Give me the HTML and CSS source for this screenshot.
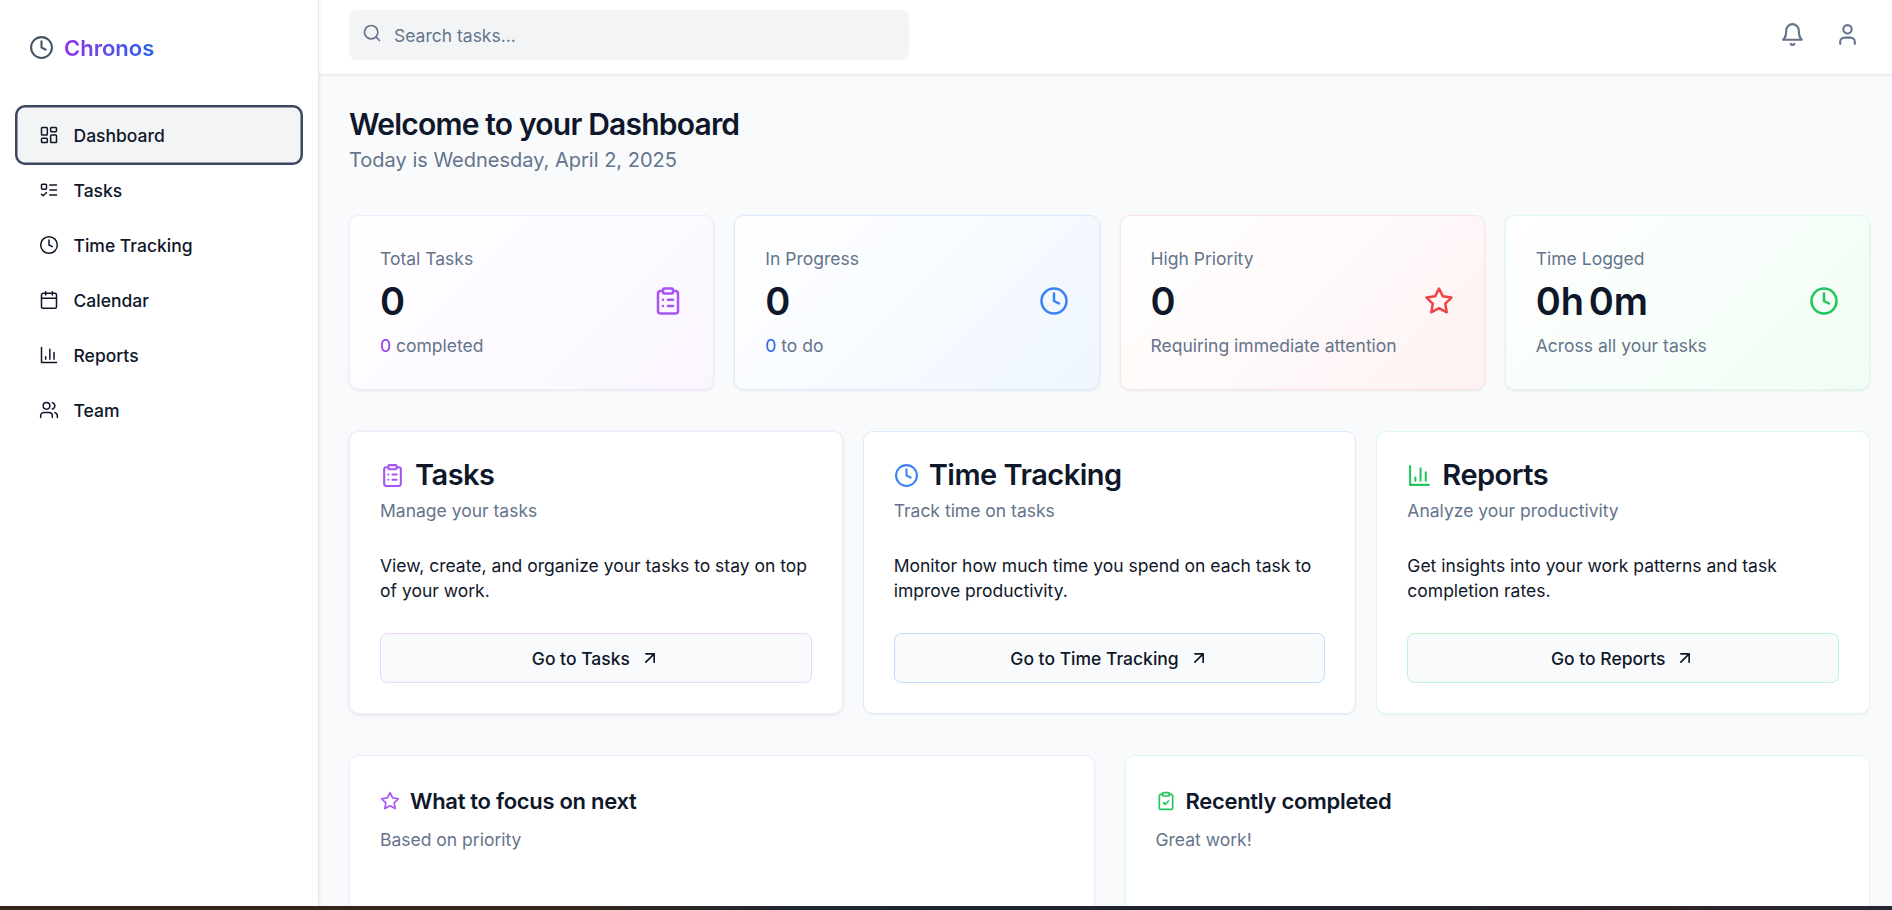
FILE: index.html
```html
<!DOCTYPE html>
<html lang="en">
<head>
<meta charset="utf-8">
<title>Chronos</title>
<link rel="stylesheet" href="styles.css">
</head>
<body>
<svg class="defs" width="0" height="0" aria-hidden="true">
  <defs>
    <symbol id="i-clock" viewBox="0 0 24 24"><circle cx="12" cy="12" r="10"/><path d="M12 6v6l4 2"/></symbol>
    <symbol id="i-clipboard" viewBox="0 0 24 24"><rect x="8" y="2" width="8" height="4" rx="1"/><path d="M16 4h2a2 2 0 0 1 2 2v14a2 2 0 0 1-2 2H6a2 2 0 0 1-2-2V6a2 2 0 0 1 2-2h2"/><path d="M12 11h4M12 16h4M8 11h.01M8 16h.01"/></symbol>
    <symbol id="i-check" viewBox="0 0 24 24"><rect x="8" y="2" width="8" height="4" rx="1"/><path d="M16 4h2a2 2 0 0 1 2 2v14a2 2 0 0 1-2 2H6a2 2 0 0 1-2-2V6a2 2 0 0 1 2-2h2"/><path d="m9 14 2 2 4-4"/></symbol>
    <symbol id="i-star" viewBox="0 0 24 24"><path d="M12 2l3.09 6.26L22 9.27l-5 4.87 1.18 6.88L12 17.77l-6.18 3.25L7 14.14 2 9.27l6.91-1.01L12 2z"/></symbol>
    <symbol id="i-chart" viewBox="0 0 24 24"><path d="M3 3v18h18"/><path d="M18 17V9M13 17V5M8 17v-3"/></symbol>
    <symbol id="i-arrow" viewBox="0 0 24 24"><path d="M7 17 17 7M7 7h10v10"/></symbol>
  </defs>
</svg>
<div class="app">
  <aside class="sidebar">
    <div class="brand">
      <svg class="icon brand-icon"><use href="#i-clock"/></svg>
      <span class="brand-name">Chronos</span>
    </div>
    <nav class="nav">
      <a class="nav-item active">
        <svg class="icon nav-icon" viewBox="0 0 24 24"><rect x="3" y="3" width="7" height="9" rx="1"/><rect x="14" y="3" width="7" height="5" rx="1"/><rect x="14" y="12" width="7" height="9" rx="1"/><rect x="3" y="16" width="7" height="5" rx="1"/></svg>
        Dashboard
      </a>
      <a class="nav-item">
        <svg class="icon nav-icon" viewBox="0 0 24 24"><rect x="3" y="5" width="6" height="6" rx="1"/><path d="m3 17 2 2 4-4"/><path d="M13 6h8M13 12h8M13 18h8"/></svg>
        Tasks
      </a>
      <a class="nav-item"><svg class="icon nav-icon"><use href="#i-clock"/></svg>Time Tracking</a>
      <a class="nav-item">
        <svg class="icon nav-icon" viewBox="0 0 24 24"><path d="M8 2v4M16 2v4"/><rect x="3" y="4" width="18" height="18" rx="2"/><path d="M3 10h18"/></svg>
        Calendar
      </a>
      <a class="nav-item"><svg class="icon nav-icon"><use href="#i-chart"/></svg>Reports</a>
      <a class="nav-item">
        <svg class="icon nav-icon" viewBox="0 0 24 24"><path d="M16 21v-2a4 4 0 0 0-4-4H6a4 4 0 0 0-4 4v2"/><circle cx="9" cy="7" r="4"/><path d="M22 21v-2a4 4 0 0 0-3-3.87M16 3.13a4 4 0 0 1 0 7.75"/></svg>
        Team
      </a>
    </nav>
  </aside>
  <div class="content">
    <header class="topbar">
      <div class="search">
        <svg class="icon search-icon" viewBox="0 0 24 24"><circle cx="11" cy="11" r="8"/><path d="m21 21-4.3-4.3"/></svg>
        <span class="search-text">Search tasks...</span>
      </div>
      <div class="top-actions">
        <svg class="icon top-icon" viewBox="0 0 24 24"><path d="M6 8a6 6 0 0 1 12 0c0 7 3 9 3 9H3s3-2 3-9"/><path d="M10.3 21a1.94 1.94 0 0 0 3.4 0"/></svg>
        <svg class="icon top-icon" viewBox="0 0 24 24"><path d="M19 21v-2a4 4 0 0 0-4-4H9a4 4 0 0 0-4 4v2"/><circle cx="12" cy="7" r="4"/></svg>
      </div>
    </header>
    <main class="main">
      <h1 class="page-title">Welcome to your Dashboard</h1>
      <p class="page-sub">Today is Wednesday, April 2, 2025</p>

      <section class="stats">
        <div class="stat purple">
          <div class="stat-label">Total Tasks</div>
          <div class="stat-row"><span class="stat-value">0</span><svg class="icon stat-icon"><use href="#i-clipboard"/></svg></div>
          <div class="stat-note"><span class="num">0</span> completed</div>
        </div>
        <div class="stat blue">
          <div class="stat-label">In Progress</div>
          <div class="stat-row"><span class="stat-value">0</span><svg class="icon stat-icon"><use href="#i-clock"/></svg></div>
          <div class="stat-note"><span class="num">0</span> to do</div>
        </div>
        <div class="stat red">
          <div class="stat-label">High Priority</div>
          <div class="stat-row"><span class="stat-value">0</span><svg class="icon stat-icon"><use href="#i-star"/></svg></div>
          <div class="stat-note">Requiring immediate attention</div>
        </div>
        <div class="stat green">
          <div class="stat-label">Time Logged</div>
          <div class="stat-row"><span class="stat-value">0h 0m</span><svg class="icon stat-icon"><use href="#i-clock"/></svg></div>
          <div class="stat-note">Across all your tasks</div>
        </div>
      </section>

      <section class="actions">
        <div class="action purple raised">
          <h2 class="action-title"><svg class="icon action-icon"><use href="#i-clipboard"/></svg>Tasks</h2>
          <p class="action-sub">Manage your tasks</p>
          <p class="action-body">View, create, and organize your tasks to stay on top of your work.</p>
          <a class="action-btn">Go to Tasks<svg class="icon btn-icon"><use href="#i-arrow"/></svg></a>
        </div>
        <div class="action blue">
          <h2 class="action-title"><svg class="icon action-icon"><use href="#i-clock"/></svg>Time Tracking</h2>
          <p class="action-sub">Track time on tasks</p>
          <p class="action-body">Monitor how much time you spend on each task to improve productivity.</p>
          <a class="action-btn">Go to Time Tracking<svg class="icon btn-icon"><use href="#i-arrow"/></svg></a>
        </div>
        <div class="action green">
          <h2 class="action-title"><svg class="icon action-icon"><use href="#i-chart"/></svg>Reports</h2>
          <p class="action-sub">Analyze your productivity</p>
          <p class="action-body">Get insights into your work patterns and task completion rates.</p>
          <a class="action-btn">Go to Reports<svg class="icon btn-icon"><use href="#i-arrow"/></svg></a>
        </div>
      </section>

      <section class="lists">
        <div class="list purple">
          <h3 class="list-title"><svg class="icon list-icon"><use href="#i-star"/></svg>What to focus on next</h3>
          <p class="list-sub">Based on priority</p>
        </div>
        <div class="list green">
          <h3 class="list-title"><svg class="icon list-icon"><use href="#i-check"/></svg>Recently completed</h3>
          <p class="list-sub">Great work!</p>
        </div>
      </section>
    </main>
  </div>
</div>
<div class="strip"></div>
</body>
</html>
```
FILE: styles.css
```css
* { box-sizing: border-box; }
html, body { margin: 0; height: 100%; overflow: hidden; }
body {
  font-family: Inter, "Liberation Sans", sans-serif;
  color: #0f172a;
  background: #f9fafb;
  display: flex;
  flex-direction: column;
}
p, h1, h2, h3 { margin: 0; }
.defs { position: absolute; }
.icon { fill: none; stroke: currentColor; stroke-width: 2; stroke-linecap: round; stroke-linejoin: round; flex: none; }

.app { flex: 1; min-height: 0; display: flex; }
.strip { height: 4px; flex: none; background: linear-gradient(90deg, #33271b, #33271b 30%, #1f2630 42%, #1f232d 70%, #2e2226 88%, #232833); }

.sidebar { width: 319px; flex: none; background: #fff; border-right: 1px solid #e5e7eb; box-shadow: 1px 0 3px rgba(15,23,42,.05); padding: 0 15.5px 0 14.5px; z-index: 2; }
.brand { height: 95px; display: flex; align-items: center; padding-left: 14.5px; gap: 10px; }
.brand-icon { width: 25px; height: 25px; color: #475569; }
.brand-name { font-size: 22px; font-weight: 600; background: linear-gradient(90deg, #9333ea, #2563eb); -webkit-background-clip: text; background-clip: text; color: transparent; }
.nav { margin-top: 10px; display: flex; flex-direction: column; gap: 5px; }
.nav-item { height: 50px; display: flex; align-items: center; padding: 0 24.5px; gap: 14.5px; font-size: 17.5px; font-weight: 500; color: #0f172a; border-radius: 10px; }
.nav-item.active { background: #f3f4f6; box-shadow: inset 0 0 0 2.5px #3b4860; height: 60px; margin-bottom: -5px; }
.nav-icon { width: 20px; height: 20px; stroke-width: 1.8; }

.content { flex: 1; min-width: 0; display: flex; flex-direction: column; }
.topbar { height: 75px; flex: none; background: #fff; border-bottom: 1px solid #e5e7eb; box-shadow: 0 1px 2px rgba(15,23,42,.05); display: flex; align-items: flex-start; justify-content: space-between; padding: 10px 32.5px 0 30px; z-index: 1; }
.search { width: 560px; height: 50px; background: #f3f4f6; border-radius: 8px; display: flex; align-items: center; padding-left: 13px; gap: 12px; }
.search-icon { width: 20px; height: 20px; color: #64748b; margin-top: -4px; }
.search-text { font-size: 17.5px; color: #64748b; }
.top-actions { display: flex; align-items: center; gap: 30px; margin-top: 12px; }
.top-icon { width: 25px; height: 25px; color: #64748b; }

.main { flex: 1; min-height: 0; overflow: hidden; padding: 31px 22px 0 30px; }
.page-title { font-size: 30px; font-weight: 600; line-height: 37px; letter-spacing: -.8px; color: #0f172a; }
.page-sub { font-size: 20px; line-height: 30px; color: #64748b; margin-top: 2px; }

.stats { display: grid; grid-template-columns: repeat(4, 1fr); gap: 20px; margin-top: 40px; }
.stat { height: 175px; border: 1px solid; border-radius: 10px; padding: 30px; box-shadow: 0 1px 3px rgba(15,23,42,.08); }
.stat.purple { border-color: #f3e8ff; background: linear-gradient(135deg, #fff, #faf5ff); }
.stat.blue { border-color: #dbeafe; background: linear-gradient(135deg, #fff, #eff6ff); }
.stat.red { border-color: #fee2e2; background: linear-gradient(135deg, #fff, #fef2f2); }
.stat.green { border-color: #dcfce7; background: linear-gradient(135deg, #fff, #f0fdf4); }
.stat-label { font-size: 17.5px; line-height: 25px; color: #64748b; }
.stat-row { display: flex; align-items: center; justify-content: space-between; height: 40px; margin-top: 10px; }
.stat-value { font-size: 38px; font-weight: 600; line-height: 40px; word-spacing: -5px; color: #0f172a; }
.stat-icon { width: 30px; height: 30px; }
.purple .stat-icon, .purple .action-icon, .purple .list-icon { color: #a855f7; }
.blue .stat-icon, .blue .action-icon { color: #3b82f6; }
.red .stat-icon { color: #ef4444; }
.green .stat-icon, .green .action-icon, .green .list-icon { color: #22c55e; }
.stat-note { font-size: 17.5px; line-height: 25px; color: #64748b; margin-top: 12px; }
.purple .num { color: #9333ea; }
.blue .num { color: #2563eb; }

.actions { display: grid; grid-template-columns: repeat(3, 1fr); gap: 20px; margin-top: 40.5px; align-items: start; }
.action { height: 283px; background: #fff; border: 1px solid; border-radius: 10px; padding: 28.5px 30px 0; box-shadow: 0 1px 2px rgba(15,23,42,.05); }
.action.raised { box-shadow: 0 1px 4px rgba(15,23,42,.09); }
.action.purple { border-color: #f3e8ff; }
.action.blue { border-color: #dbeafe; }
.action.green { border-color: #dcfce7; }
.action-title { display: flex; align-items: center; gap: 10px; font-size: 29px; font-weight: 600; line-height: 30px; letter-spacing: -.5px; color: #0f172a; }
.action-icon { width: 25px; height: 25px; }
.action-sub { font-size: 17.5px; line-height: 25px; color: #64748b; margin-top: 8px; }
.action-body { font-size: 17.5px; line-height: 25px; color: #0f172a; margin-top: 30px; }
.action-btn { display: flex; align-items: center; justify-content: center; gap: 10px; height: 50px; margin-top: 30px; background: #f9fafb; border: 1px solid; border-radius: 7.5px; font-size: 17.5px; font-weight: 500; color: #0f172a; }
.action.purple .action-btn { border-color: #e9d5ff; }
.action.blue .action-btn { border-color: #bfdbfe; }
.action.green .action-btn { border-color: #bbf7d0; }
.btn-icon { width: 20px; height: 20px; }

.lists { display: grid; grid-template-columns: repeat(2, 1fr); gap: 30px; margin-top: 41px; }
.list { height: 300px; background: #fff; border: 1px solid; border-radius: 10px; padding: 30px; box-shadow: 0 1px 2px rgba(15,23,42,.05); }
.list.purple { border-color: #f3e8ff; }
.list.green { border-color: #dcfce7; }
.list-title { display: flex; align-items: center; gap: 10px; font-size: 22px; font-weight: 600; line-height: 30px; letter-spacing: -.3px; color: #0f172a; }
.list-icon { width: 20px; height: 20px; }
.list-sub { font-size: 17.5px; line-height: 25px; color: #64748b; margin-top: 11px; }
```
